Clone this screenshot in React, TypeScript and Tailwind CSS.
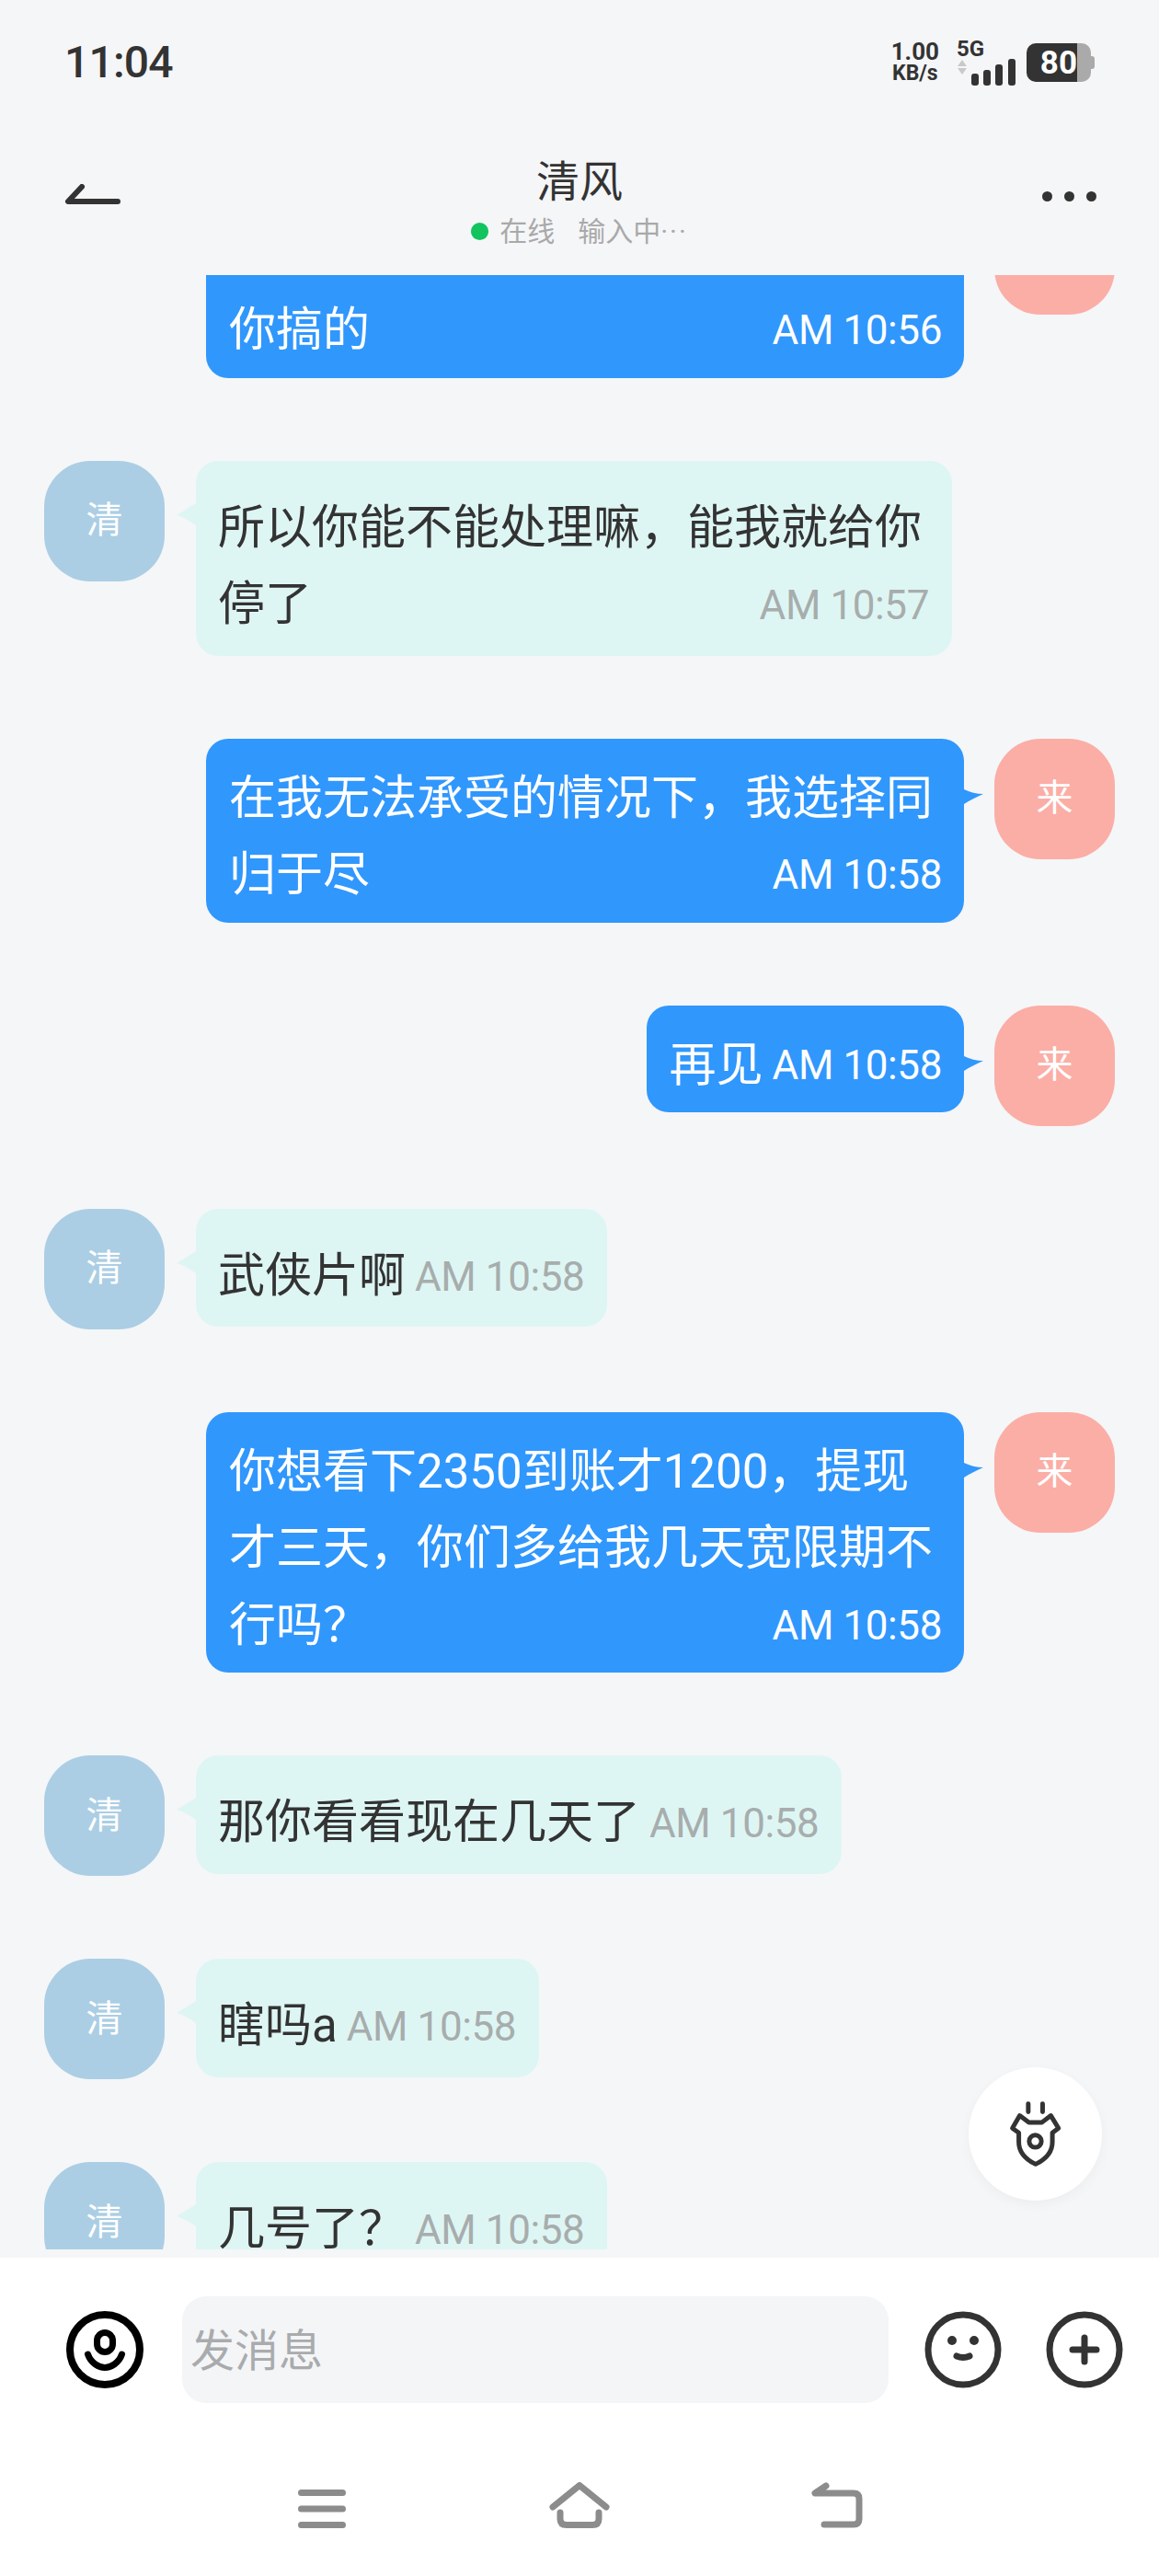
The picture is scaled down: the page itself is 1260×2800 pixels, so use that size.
const FONT = "font-['Roboto','Noto_Sans_CJK_SC',sans-serif]";

type Message = { id: number; side: "left" | "right"; text: string; time: string; clipped?: boolean };

const MESSAGES: Message[] = [
  { id: 1, side: "right", text: "你搞的", time: "AM 10:56", clipped: true },
  { id: 2, side: "left", text: "所以你能不能处理嘛，能我就给你停了", time: "AM 10:57" },
  { id: 3, side: "right", text: "在我无法承受的情况下，我选择同归于尽", time: "AM 10:58" },
  { id: 4, side: "right", text: "再见", time: "AM 10:58" },
  { id: 5, side: "left", text: "武侠片啊", time: "AM 10:58" },
  { id: 6, side: "right", text: "你想看下2350到账才1200，提现才三天，你们多给我几天宽限期不行吗？", time: "AM 10:58" },
  { id: 7, side: "left", text: "那你看看现在几天了", time: "AM 10:58" },
  { id: 8, side: "left", text: "瞎吗a", time: "AM 10:58" },
  { id: 9, side: "left", text: "几号了？", time: "AM 10:58" },
];

function StatusBar() {
  return (
    <div className="h-[136px] flex items-center justify-between pl-[70px] pr-[70px]">
      <span className="text-[48px] leading-none font-medium text-[#333333] tracking-[-0.8px]">11:04</span>
      <div className="flex items-center">
        <div className="flex flex-col items-center font-bold text-[#333333]">
          <span className="text-[26px] leading-[24px]">1.00</span>
          <span className="text-[23px] leading-[24px]">KB/s</span>
        </div>
        <div className="ml-[19px] flex flex-col">
          <span className="text-[24px] leading-[22px] font-bold text-[#333333]">5G</span>
          <svg width="64" height="30" viewBox="0 0 64 30">
            <path d="M6 1L11 8H1Z M6 17L11 10H1Z" fill="#c9c9c9" />
            <rect x="16" y="16" width="8" height="13" rx="3" fill="#333333" />
            <rect x="29" y="12" width="8" height="17" rx="3" fill="#333333" />
            <rect x="42" y="6" width="8" height="23" rx="3" fill="#333333" />
            <rect x="56" y="0" width="8" height="29" rx="3" fill="#333333" />
          </svg>
        </div>
        <div className="ml-[12px] flex items-center">
          <div className="w-[55px] h-[42px] bg-[#333333] rounded-l-[10px] flex items-center justify-end text-white font-bold text-[35px] leading-none">
            80
          </div>
          <div className="w-[15px] h-[42px] bg-[#aaaaaa] rounded-r-[10px]" />
          <div className="w-[4px] h-[14px] bg-[#aaaaaa] rounded-r-[3px]" />
        </div>
      </div>
    </div>
  );
}

function ChatHeader() {
  return (
    <div className="h-[163px] flex items-start justify-between pl-[70px] pr-[68px]">
      <svg className="mt-[64px] -mr-[5px]" width="62" height="26" viewBox="0 0 62 26">
        <path d="M19 3L4 19H58" fill="none" stroke="#333333" strokeWidth="6" strokeLinecap="round" strokeLinejoin="round" />
      </svg>
      <div className="flex flex-col items-center pt-[32px]">
        <span className="text-[47px] leading-[60px] text-[#333333]">清风</span>
        <div className="mt-[3px] h-[40px] flex items-center text-[30px] text-[#a9a9a9]">
          <span className="w-[19px] h-[19px] rounded-full bg-[#12c45e] mr-[12px]" />
          <span>在线</span>
          <span className="ml-[25px]">
            输入中<span className="tracking-[2px]">···</span>
          </span>
        </div>
      </div>
      <div className="mt-[72px] flex gap-[13px]">
        <span className="w-[11px] h-[11px] rounded-full bg-[#333333]" />
        <span className="w-[11px] h-[11px] rounded-full bg-[#333333]" />
        <span className="w-[11px] h-[11px] rounded-full bg-[#333333]" />
      </div>
    </div>
  );
}

function MessageRow({ message }: { message: Message }) {
  if (message.side === "right") {
    return (
      <div className="flex justify-end items-start pr-[48px]">
        <div
          className={`relative max-w-[824px] bg-[#3097fd] rounded-[24px] pl-[25px] pr-[24px] pb-[10px] mr-[33px] text-white ${
            message.clipped ? "w-[824px] pt-[106px]" : "w-fit pt-[23px]"
          }`}
        >
          <svg className="absolute left-full top-[53px]" width="22" height="20" viewBox="0 0 22 20">
            <path d="M0 2C6 5 14 7 21 7C14 10 6 14 0 18Z" fill="#3097fd" />
          </svg>
          <p className="text-[51px] leading-[83.5px]">
            {message.text}
            <span className="float-right ml-[10px] mt-[2px] text-[44px] leading-[81.5px] tracking-[-0.4px]">{message.time}</span>
          </p>
        </div>
        <div className="w-[131px] h-[131px] shrink-0 rounded-[50px] bg-[#fbaea6] flex items-center justify-center text-white text-[40px]">
          来
        </div>
      </div>
    );
  }

  return (
    <div className="flex items-start pl-[48px]">
      <div className="w-[131px] h-[131px] shrink-0 rounded-[50px] bg-[#abcee4] flex items-center justify-center text-white text-[40px]">
        清
      </div>
      <div className="relative max-w-[822px] w-fit bg-[#def6f3] rounded-[24px] pl-[24px] pr-[25px] pt-[31px] pb-[14px] ml-[34px] text-[#333333]">
        <svg className="absolute right-full top-[46px]" width="22" height="24" viewBox="0 0 22 24">
          <path d="M22 0L1 13C8 15 15 19 22 24Z" fill="#def6f3" />
        </svg>
        <p className="text-[51px] leading-[83.5px]">
          {message.text}
          <span className="float-right ml-[10px] mt-[4px] text-[44px] leading-[79.5px] tracking-[-0.4px] text-[#a7adad]">{message.time}</span>
        </p>
      </div>
    </div>
  );
}

function ShieldButton() {
  return (
    <div className="absolute right-[62px] bottom-[53px] w-[145px] h-[145px] rounded-full bg-white shadow-[0_4px_14px_rgba(0,0,0,0.04)] flex items-center justify-center">
      <svg width="62" height="78" viewBox="225 180 185 235" fill="none" stroke="#333333" strokeWidth="15" strokeLinecap="round" strokeLinejoin="round">
        <path d="M293 197V224 M340 197V224" />
        <path d="M265 236L295 258H338L367 236L392 277L372 292V322Q372 368 317 395Q262 368 262 322V292L241 277Z" />
        <circle cx="316" cy="320" r="20" />
      </svg>
    </div>
  );
}

function InputBar() {
  return (
    <div className="flex-1 bg-white">
      <div className="flex items-center pt-[42px] pl-[72px]">
        <svg width="84" height="84" viewBox="0 0 84 84" fill="none" stroke="#000000" strokeWidth="7" strokeLinecap="round">
          <circle cx="42" cy="42" r="38" strokeWidth="8" />
          <rect x="33.5" y="23.5" width="17" height="21" rx="8.5" />
          <path d="M23.5 47C27 57 36 61.5 42 61.5C48 61.5 57 57 60.5 47" />
        </svg>
        <div className="ml-[42px] w-[768px] h-[116px] bg-[#f4f5f7] rounded-[26px] flex items-center pl-[9px] pt-[3px] text-[48px] text-[#a9abad]">
          发消息
        </div>
        <svg className="ml-[39px]" width="84" height="84" viewBox="0 0 84 84" fill="none" stroke="#333333" strokeWidth="7" strokeLinecap="round">
          <circle cx="42" cy="42" r="38" />
          <circle cx="30" cy="32" r="5" fill="#333333" stroke="none" />
          <circle cx="54" cy="32" r="5" fill="#333333" stroke="none" />
          <path d="M35 49Q42 52 49 49" />
        </svg>
        <svg className="ml-[48px]" width="84" height="84" viewBox="0 0 84 84" fill="none" stroke="#333333" strokeWidth="7" strokeLinecap="round">
          <circle cx="42" cy="42" r="38" />
          <path d="M29 42H55 M42 29V55" />
        </svg>
      </div>
      <div className="mt-[86px] pl-[324px] flex items-end">
        <svg width="52" height="42" viewBox="0 0 52 42" fill="none" stroke="#8c8c8c" strokeWidth="7" strokeLinecap="round">
          <path d="M3.500 3.500H48.500 M3.500 21H48.500 M3.500 38.500H48.500" />
        </svg>
        <svg className="ml-[221px]" width="66" height="50" viewBox="0 0 66 50" fill="none" stroke="#8c8c8c" strokeWidth="7" strokeLinecap="round" strokeLinejoin="round">
          <path d="M4 27L33 3.500L62 27" />
          <path d="M12 33V40Q12 46.500 19 46.500H47Q54 46.500 54 40V33" />
        </svg>
        <svg className="ml-[219px]" width="56" height="50" viewBox="0 0 56 50" fill="none" stroke="#8c8c8c" strokeWidth="7" strokeLinecap="round" strokeLinejoin="round">
          <path d="M16 4L4 12H46Q52 12 52 18V40Q52 46 46 46H14" />
        </svg>
      </div>
    </div>
  );
}

export default function App() {
  return (
    <div className={`w-[1260px] h-[2800px] bg-[#f5f6f8] flex flex-col overflow-hidden ${FONT}`}>
      <StatusBar />
      <ChatHeader />
      <div className="relative h-[2146px] shrink-0 overflow-hidden">
        <div className="flex flex-col gap-[90px] -mt-[88px]">
          {MESSAGES.map((message) => (
            <MessageRow key={message.id} message={message} />
          ))}
        </div>
        <ShieldButton />
      </div>
      <div className="h-[9px] shrink-0" />
      <InputBar />
    </div>
  );
}
